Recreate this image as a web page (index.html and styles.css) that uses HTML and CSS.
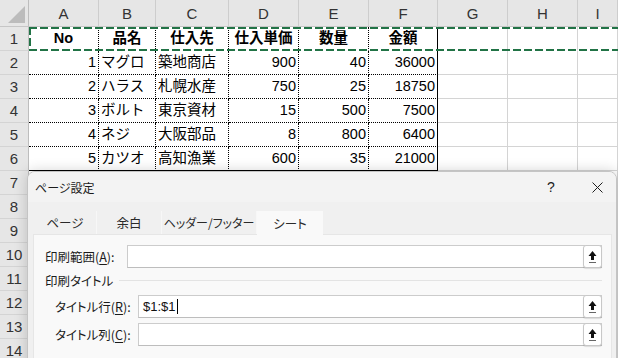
FILE: index.html
```html
<!DOCTYPE html>
<html lang="ja">

<head>
    <meta charset="UTF-8">
    <meta name="viewport" content="width=device-width, initial-scale=1.0">
    <title>ページ設定</title>
    <link rel="stylesheet" href="styles.css">
</head>

<body>
    <div class="sheet">
        <div class="grid">
            <!-- 列見出し -->
            <div class="hd corner"></div>
            <div class="hd">A</div>
            <div class="hd">B</div>
            <div class="hd">C</div>
            <div class="hd">D</div>
            <div class="hd">E</div>
            <div class="hd">F</div>
            <div class="hd">G</div>
            <div class="hd">H</div>
            <div class="hd">I</div>

            <!-- 1行目 -->
            <div class="rh">1</div>
            <div class="c h d top">No</div>
            <div class="c h d top">品名</div>
            <div class="c h d top">仕入先</div>
            <div class="c h d top">仕入単価</div>
            <div class="c h d top">数量</div>
            <div class="c h top edge">金額</div>
            <div class="c top"></div>
            <div class="c top"></div>
            <div class="c top"></div>

            <div class="rh">2</div>
            <div class="c n d">1</div>
            <div class="c d">マグロ</div>
            <div class="c d">築地商店</div>
            <div class="c n d">900</div>
            <div class="c n d">40</div>
            <div class="c n d edge">36000</div>
            <div class="c"></div>
            <div class="c"></div>
            <div class="c"></div>

            <div class="rh">3</div>
            <div class="c n d">2</div>
            <div class="c d">ハラス</div>
            <div class="c d">札幌水産</div>
            <div class="c n d">750</div>
            <div class="c n d">25</div>
            <div class="c n d edge">18750</div>
            <div class="c"></div>
            <div class="c"></div>
            <div class="c"></div>

            <div class="rh">4</div>
            <div class="c n d">3</div>
            <div class="c d">ボルト</div>
            <div class="c d">東京資材</div>
            <div class="c n d">15</div>
            <div class="c n d">500</div>
            <div class="c n d edge">7500</div>
            <div class="c"></div>
            <div class="c"></div>
            <div class="c"></div>

            <div class="rh">5</div>
            <div class="c n d">4</div>
            <div class="c d">ネジ</div>
            <div class="c d">大阪部品</div>
            <div class="c n d">8</div>
            <div class="c n d">800</div>
            <div class="c n d edge">6400</div>
            <div class="c"></div>
            <div class="c"></div>
            <div class="c"></div>

            <div class="rh">6</div>
            <div class="c n d last">5</div>
            <div class="c d last">カツオ</div>
            <div class="c d last">高知漁業</div>
            <div class="c n d last">600</div>
            <div class="c n d last">35</div>
            <div class="c n d edge last">21000</div>
            <div class="c"></div>
            <div class="c"></div>
            <div class="c"></div>

            <!-- ダイアログの下に隠れる行 -->
            <div class="rh">7</div><div class="c wide"></div>
            <div class="rh">8</div><div class="c wide"></div>
            <div class="rh">9</div><div class="c wide"></div>
            <div class="rh">10</div><div class="c wide"></div>
            <div class="rh">11</div><div class="c wide"></div>
            <div class="rh">12</div><div class="c wide"></div>
            <div class="rh">13</div><div class="c wide"></div>
            <div class="rh">14</div><div class="c wide"></div>
        </div>

        <!-- 印刷タイトルの点線枠 -->
        <div class="marquee"></div>

        <div class="dialog">
            <div class="titlebar">
                <span class="title">ページ設定</span>
                <span class="tb-btn help">?</span>
                <span class="tb-btn close">
                    <svg width="11" height="11" viewBox="0 0 11 11">
                        <path d="M0.5 0.5 L10.5 10.5 M10.5 0.5 L0.5 10.5" stroke="#1f1f1f" stroke-width="1" fill="none" />
                    </svg>
                </span>
            </div>
            <div class="tabs">
                <div class="tab t-page">ページ</div>
                <div class="tab t-margin">余白</div>
                <div class="tab t-hf">ヘッダー/フッター</div>
                <div class="tab t-sheet active">シート</div>
            </div>
            <div class="panel">
                <div class="field">
                    <span class="label">印刷範囲(<u>A</u>):</span>
                    <div class="input">
                        <span class="value"></span>
                        <span class="pick">
                            <svg width="9" height="14" viewBox="0 0 9 14">
                                <path d="M4.5 1 L8.5 6 H6 V10 H3 V6 H0.5 Z" fill="#111" />
                                <rect x="1" y="12" width="7" height="1" fill="#666" />
                            </svg>
                        </span>
                    </div>
                </div>
                <div class="group-title">
                    <span>印刷タイトル</span>
                    <span class="rule"></span>
                </div>
                <div class="group">
                    <div class="field">
                        <span class="label">タイトル行(<u>R</u>):</span>
                        <div class="input">
                            <span class="value">$1:$1<i class="caret"></i></span>
                            <span class="pick">
                                <svg width="9" height="14" viewBox="0 0 9 14">
                                    <path d="M4.5 1 L8.5 6 H6 V10 H3 V6 H0.5 Z" fill="#111" />
                                    <rect x="1" y="12" width="7" height="1" fill="#666" />
                                </svg>
                            </span>
                        </div>
                    </div>
                    <div class="field">
                        <span class="label">タイトル列(<u>C</u>):</span>
                        <div class="input">
                            <span class="value"></span>
                            <span class="pick">
                                <svg width="9" height="14" viewBox="0 0 9 14">
                                    <path d="M4.5 1 L8.5 6 H6 V10 H3 V6 H0.5 Z" fill="#111" />
                                    <rect x="1" y="12" width="7" height="1" fill="#666" />
                                </svg>
                            </span>
                        </div>
                    </div>
                </div>
            </div>
        </div>
    </div>
</body>

</html>
```

FILE: styles.css
```css
* {
    margin: 0;
    padding: 0;
    box-sizing: border-box;
}

body {
    background-color: #ffffff;
    overflow: hidden;
}

.sheet {
    position: relative;
    width: 618px;
    height: 358px;
    overflow: hidden;
    font-family: "Liberation Sans", "Noto Sans CJK JP", sans-serif;
    font-size: 14.5px;
    color: #000;
}

.grid {
    display: grid;
    grid-template-columns: 29px 70px 57px 73px 70px 70px 69px 70px 70px 1fr;
    grid-template-rows: 27px;
    grid-auto-rows: 24px;
}

/* 見出し */
.hd {
    background-color: #e6e6e6;
    border-right: 1px solid #cdcdcd;
    border-bottom: 1px solid #c6c6c6;
    display: flex;
    align-items: center;
    justify-content: center;
    color: #333;
    font-size: 15px;
    padding-top: 1px;
}

.corner {
    position: relative;
    border-right-color: #bdbdbd;
}

.corner::after {
    content: "";
    position: absolute;
    right: 3px;
    bottom: 3px;
    border-style: solid;
    border-width: 0 0 17px 17px;
    border-color: transparent transparent #bcbcbc transparent;
}

.rh {
    background-color: #e6e6e6;
    border-right: 1px solid #bdbdbd;
    border-bottom: 1px solid #d4d4d4;
    display: flex;
    align-items: center;
    justify-content: center;
    color: #333;
    font-size: 15px;
}

/* セル */
.c {
    background-color: #fff;
    border-right: 1px solid #d4d4d4;
    border-bottom: 1px solid #d4d4d4;
    display: flex;
    align-items: center;
    padding: 0 2px;
    white-space: nowrap;
    overflow: hidden;
    line-height: 1;
}

.c.wide {
    grid-column: span 9;
}

.n {
    justify-content: flex-end;
}

.h {
    justify-content: center;
    font-weight: bold;
}

.d {
    border-right: 1px dotted #000;
    border-bottom: 1px dotted #000;
}

.top {
    border-bottom: 1px solid #fff;
}

.edge {
    border-right: 1px solid #000;
}

.last {
    border-bottom: 1px solid #000;
}

.marquee {
    position: absolute;
    left: 29px;
    top: 27px;
    right: 0;
    height: 24px;
    background:
        repeating-linear-gradient(90deg, #217346 0 8px, transparent 8px 11px) left top / 100% 2px no-repeat,
        repeating-linear-gradient(90deg, #217346 0 8px, transparent 8px 11px) left bottom / 100% 2px no-repeat,
        repeating-linear-gradient(180deg, #217346 0 8px, transparent 8px 11px) left top / 2px 100% no-repeat;
}

/* ダイアログ */
.dialog {
    position: absolute;
    left: 27px;
    top: 171px;
    width: 590px;
    height: 210px;
    background-color: #f0f0f0;
    border: 1px solid #c4c4c4;
    border-radius: 8px 8px 0 0;
    box-shadow: 0 0 14px rgba(0, 0, 0, .18);
    font-family: "Noto Sans CJK JP", sans-serif;
    font-size: 12.5px;
    font-feature-settings: "palt";
    color: #1b1b1b;
    overflow: hidden;
}

.titlebar {
    height: 30px;
    background-color: #f3f3f3;
    display: flex;
    align-items: center;
    padding-left: 7px;
}

.title {
    flex: 1;
    font-size: 12px;
}

.tb-btn {
    height: 30px;
    display: flex;
    align-items: center;
    justify-content: center;
}

.help {
    width: 46px;
    margin-right: 4px;
    font-family: "Liberation Sans", sans-serif;
    font-size: 14px;
}

.close {
    width: 38px;
}

.tabs {
    display: flex;
    padding: 9px 0 0 6px;
}

.tab {
    height: 23px;
    display: flex;
    align-items: center;
    justify-content: center;
    border-right: 1px solid #f7f7f7;
    color: #2a2a2a;
    font-size: 12.5px;
}

.t-page {
    width: 63px;
}

.t-margin {
    width: 65px;
}

.t-hf {
    width: 95px;
    font-size: 12px;
}

.t-sheet {
    width: 66px;
}

.tab.active {
    background-color: #f9f9f9;
    position: relative;
    z-index: 1;
    margin-bottom: -1px;
    height: 24px;
    border-right: none;
}

.panel {
    margin: 0 4px 0 5px;
    height: 140px;
    background-color: #f9f9f9;
    border: 1px solid #e6e6e6;
    padding: 10px 9px 0 11px;
}

.field {
    display: flex;
    align-items: center;
    height: 23px;
}

.label {
    width: 82px;
}

.label u {
    text-underline-offset: 2px;
}

.input {
    flex: 1;
    height: 23px;
    background-color: #fff;
    border: 1px solid #cccccc;
    border-bottom-color: #bdbdbd;
    display: flex;
    align-items: center;
    justify-content: space-between;
}

.value {
    padding-left: 4px;
    font-family: "Liberation Sans", sans-serif;
    font-size: 13px;
    color: #111;
    display: flex;
    align-items: center;
}

.caret {
    display: inline-block;
    width: 1px;
    height: 15px;
    background-color: #000;
    margin-left: 1px;
}

.pick {
    width: 19px;
    height: 23px;
    margin: -1px -1px -1px 0;
    background-color: #fff;
    border: 1px solid #c8c8c8;
    border-radius: 3px;
    box-shadow: 0 1px 1px rgba(0, 0, 0, .12);
    display: flex;
    align-items: center;
    justify-content: center;
}

.group-title {
    display: flex;
    align-items: center;
    height: 16px;
    margin-top: 4px;
}

.group-title .rule {
    flex: 1;
    border-top: 1px solid #e3e3e3;
    margin-left: 6px;
}

.group {
    padding-left: 10px;
    margin-top: 7px;
    display: flex;
    flex-direction: column;
    gap: 5px;
}

.group .label {
    width: 83px;
}
```
